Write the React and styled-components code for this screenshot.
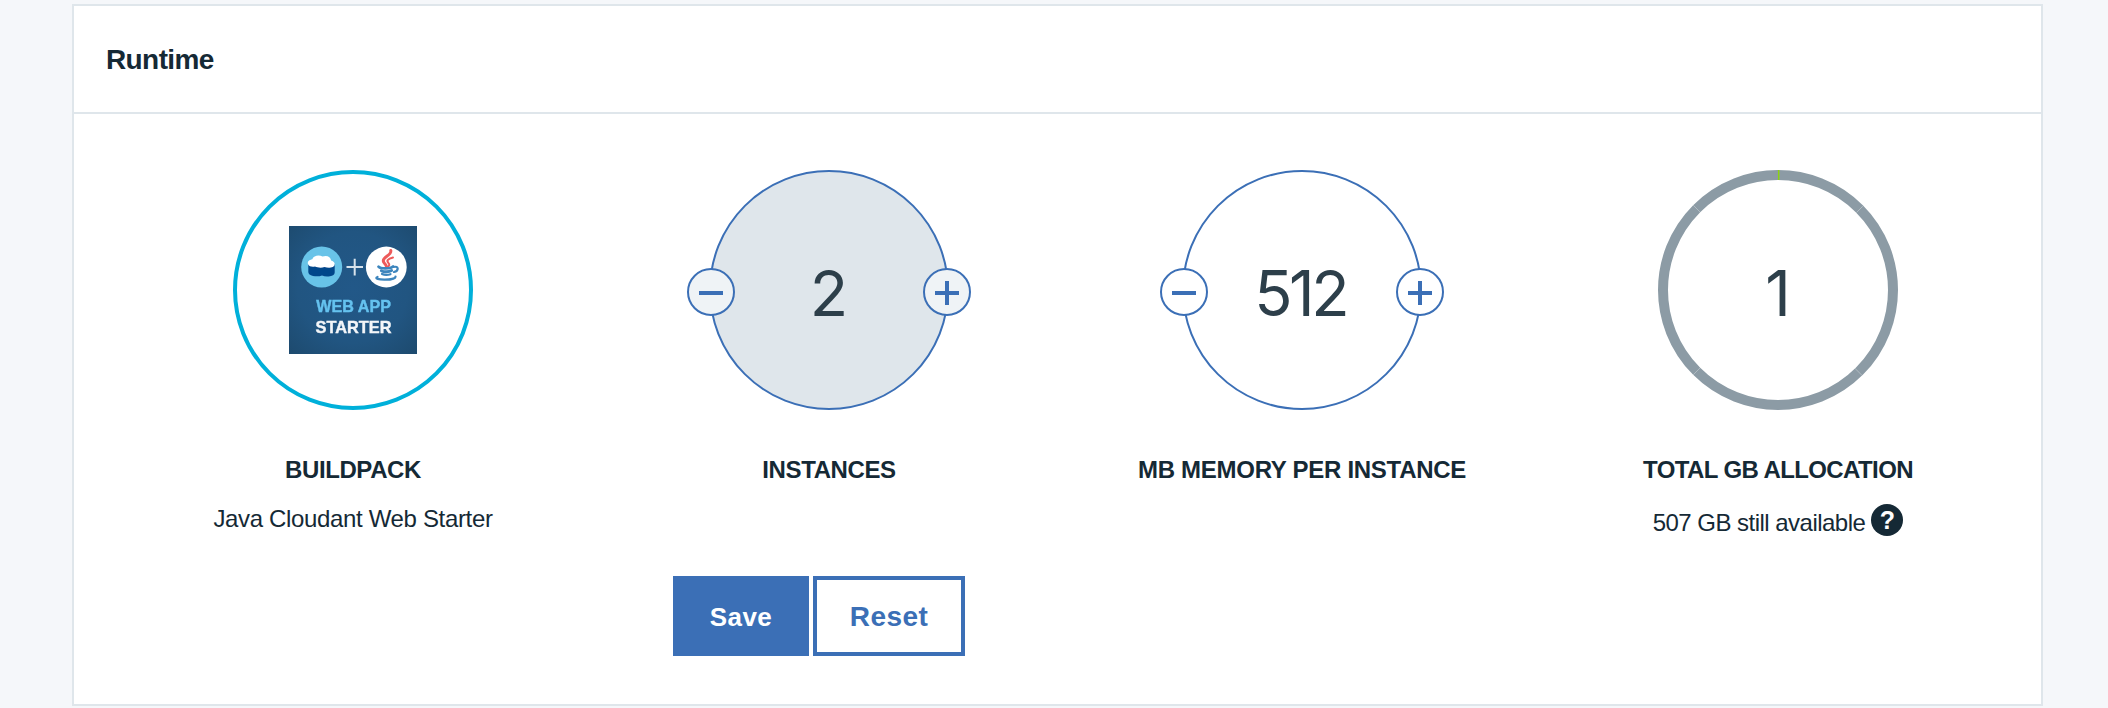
import React from "react";
import styled, { createGlobalStyle } from "styled-components";

const GlobalStyle = createGlobalStyle`
  *, *::before, *::after { box-sizing: border-box; }
  body {
    margin: 0;
    background: #f5f7fa;
    color: #152935;
    font-family: "Liberation Sans", Arial, sans-serif;
  }
`;

const Page = styled.main`
  height: 708px;
  padding: 4px 65px 2px 72px;
`;

const Card = styled.section`
  height: 702px;
  background: #fff;
  border: 2px solid #dfe6eb;
`;

const CardHeader = styled.header`
  height: 108px;
  padding: 38px 32px 0;
  border-bottom: 2px solid #dfe6eb;
`;

const Title = styled.h2`
  margin: 0;
  font-size: 28px;
  line-height: 32px;
  font-weight: 700;
  letter-spacing: -0.6px;
`;

const Metrics = styled.div`
  display: grid;
  grid-template-columns: 476px 476px 470px 482px;
  height: 422px;
  padding: 56px 0 0 41px;
`;

const Metric = styled.div`
  display: flex;
  flex-direction: column;
  align-items: center;
`;

const Circle = styled.div`
  position: relative;
  display: flex;
  align-items: center;
  justify-content: center;
  width: 240px;
  height: 240px;
  border-radius: 50%;
  border: ${(p) => p.$border || "0"};
  background: ${(p) => p.$fill || "#fff"};
`;

const Ring = styled.svg`
  position: absolute;
  inset: 0;
`;

const Value = styled.span`
  padding-top: 5px;
  font-family: Inter, "Liberation Sans", sans-serif;
  font-size: 63px;
  line-height: 64px;
  letter-spacing: ${(p) => p.$tracking || "0"};
  margin-left: ${(p) => p.$shift || "0"};
  color: #2d3f4a;
`;

const StepButton = styled.button`
  position: absolute;
  top: 96px;
  ${(p) => p.$side}: -24px;
  display: flex;
  align-items: center;
  justify-content: center;
  width: 48px;
  height: 48px;
  padding: 2px 0 0;
  border: 2px solid #3b6fb6;
  border-radius: 50%;
  background: ${(p) => p.$fill};
`;

const Label = styled.h3`
  margin: 46px 0 0;
  font-size: 24px;
  line-height: 28px;
  font-weight: 700;
  white-space: nowrap;
  letter-spacing: ${(p) => p.$tracking || "-0.4px"};
`;

const Detail = styled.p`
  margin: 21px 0 0;
  font-size: 24px;
  line-height: 28px;
  letter-spacing: -0.34px;
`;

const Availability = styled.div`
  display: flex;
  gap: 6px;
  margin-top: 20px;
  font-size: 24px;
  line-height: 28px;
  letter-spacing: -0.52px;
`;

const AvailabilityText = styled.span`
  padding-top: 5px;
`;

const Help = styled.span`
  width: 32px;
  height: 32px;
  border-radius: 50%;
  background: #152935;
  color: #fff;
  font-size: 25px;
  line-height: 33px;
  font-weight: 700;
  letter-spacing: 0;
  text-align: center;
`;

const Actions = styled.div`
  display: flex;
  gap: 4px;
  margin-top: 40px;
  padding-left: 599px;
`;

const Button = styled.button`
  width: ${(p) => p.$width};
  height: 80px;
  padding: 2px 0 0;
  border: 4px solid #3b6fb6;
  background: ${(p) => (p.$primary ? "#3b6fb6" : "#fff")};
  color: ${(p) => (p.$primary ? "#fff" : "#3b6fb6")};
  font-family: inherit;
  font-weight: 700;
  font-size: ${(p) => (p.$primary ? "26px" : "28px")};
  letter-spacing: 0.45px;
`;

function StepIcon({ plus }) {
  return (
    <svg width="24" height="24" viewBox="0 0 24 24" aria-hidden="true">
      <path d={plus ? "M0 12H24M12 0V24" : "M0 12H24"} stroke="#3b6fb6" strokeWidth="4" />
    </svg>
  );
}

function Stepper({ value, fill, buttonFill, tracking, shift }) {
  return (
    <Circle $border="2px solid #3b6fb6" $fill={fill}>
      <StepButton $side="left" $fill={buttonFill} aria-label="Decrease">
        <StepIcon />
      </StepButton>
      <Value $tracking={tracking} $shift={shift}>{value}</Value>
      <StepButton $side="right" $fill={buttonFill} aria-label="Increase">
        <StepIcon plus />
      </StepButton>
    </Circle>
  );
}

function BuildpackLogo() {
  return (
    <svg width="128" height="128" viewBox="0 0 128 128">
      <defs>
        <radialGradient id="tile" cx="50%" cy="48%" r="72%">
          <stop offset="0" stopColor="#225888" />
          <stop offset="0.6" stopColor="#215581" />
          <stop offset="1" stopColor="#1d4a6e" />
        </radialGradient>
        <filter id="soft" x="-5%" y="-5%" width="110%" height="110%">
          <feGaussianBlur stdDeviation="0.7" />
        </filter>
      </defs>
      <rect width="128" height="128" fill="url(#tile)" />
      <g filter="url(#soft)">
        <circle cx="32.7" cy="41" r="20.5" fill="#68c3e8" />
        <path d="M19.3 38H45.7V46.5Q45.5 49.7 41 50.3Q36 51 33 49.4Q29 51 24 49.9Q19.3 49 19.3 46Z" fill="#06468b" />
        <path d="M19.2 38.5C17.8 35.3 20.5 33.8 23.3 33.2C24.5 29.5 30 28.7 33.5 30.5C38 28.8 41.8 31 42.1 34.5C46 35.3 47 39.5 43.8 41C41 42.3 38 41.7 35.5 41C32 42.3 28.6 41.6 26 40.5C23 41 20.1 40.5 19.2 38.5Z" fill="#fff" />
        <path d="M57.5 41H74M65.7 32.8V49.5" stroke="#d8e3ec" strokeWidth="2" />
        <circle cx="97.3" cy="41" r="20.4" fill="#fff" />
        <g fill="none" stroke="#ed5a5a" strokeLinecap="round">
          <path d="M101.8 24.5C103 30 91.8 31 94.7 36.2C95.7 38.2 97.5 38.7 97.5 41" strokeWidth="3" />
          <path d="M104 31.5C98.8 33 97 34.7 99.6 37.2C101 38.6 100 40 99 40.7" strokeWidth="2" />
        </g>
        <g fill="none" stroke="#3c85bd" strokeLinecap="round">
          <path d="M89.5 40.7C91.5 43 101 43 104 40.5" strokeWidth="2.8" />
          <path d="M92.3 44.7C95 46.2 100 46.1 102.7 44.5" strokeWidth="2.8" />
          <path d="M93 48C96 49.3 99 49 101.5 48.2" strokeWidth="2.2" />
          <path d="M104.5 41C110 39.5 110 44.8 105 46" strokeWidth="2.2" />
          <path d="M88.5 51C85 52.5 90 53.8 96 53.7C101 53.7 106.5 52.7 106.5 50.7" strokeWidth="2.3" />
        </g>
        <g fontFamily="Liberation Sans, Arial, sans-serif" fontSize="16.4" fontWeight="700" strokeWidth="0.4">
          <text x="27.3" y="86.3" textLength="74.7" lengthAdjust="spacingAndGlyphs" fill="#65c2ef" stroke="#65c2ef">WEB APP</text>
          <text x="26.5" y="106.6" textLength="76" lengthAdjust="spacingAndGlyphs" fill="#f3f6f9" stroke="#f3f6f9">STARTER</text>
        </g>
      </g>
    </svg>
  );
}

function AllocationRing() {
  return (
    <Ring width="240" height="240" viewBox="0 0 240 240" aria-hidden="true">
      <circle cx="120" cy="120" r="115" fill="none" stroke="#8c9ba5" strokeWidth="10" />
      <path
        d="M35.2 35.2L42.2 42.2M204.8 36.2L198.5 42.5M35.2 204.8L42.2 197.8M203.8 205.2L196.8 198.2"
        stroke="#fff"
        strokeOpacity="0.45"
        strokeWidth="0.7"
      />
      <path d="M120.7 0V10" stroke="#8cd211" strokeWidth="1.5" />
    </Ring>
  );
}

export default function App() {
  return (
    <>
      <GlobalStyle />
      <Page>
        <Card>
          <CardHeader>
            <Title>Runtime</Title>
          </CardHeader>
          <Metrics>
            <Metric>
              <Circle $border="4px solid #00b0da">
                <BuildpackLogo />
              </Circle>
              <Label>BUILDPACK</Label>
              <Detail>Java Cloudant Web Starter</Detail>
            </Metric>
            <Metric>
              <Stepper value="2" fill="#dfe6eb" buttonFill="#eff3f6" />
              <Label>INSTANCES</Label>
            </Metric>
            <Metric>
              <Stepper value="512" fill="#fff" buttonFill="#fff" tracking="-3.4px" shift="-3.4px" />
              <Label $tracking="-0.28px">MB MEMORY PER INSTANCE</Label>
            </Metric>
            <Metric>
              <Circle>
                <AllocationRing />
                <Value>1</Value>
              </Circle>
              <Label $tracking="-0.6px">TOTAL GB ALLOCATION</Label>
              <Availability>
                <AvailabilityText>507 GB still available</AvailabilityText>
                <Help>?</Help>
              </Availability>
            </Metric>
          </Metrics>
          <Actions>
            <Button $primary $width="136px">Save</Button>
            <Button $width="152px">Reset</Button>
          </Actions>
        </Card>
      </Page>
    </>
  );
}
